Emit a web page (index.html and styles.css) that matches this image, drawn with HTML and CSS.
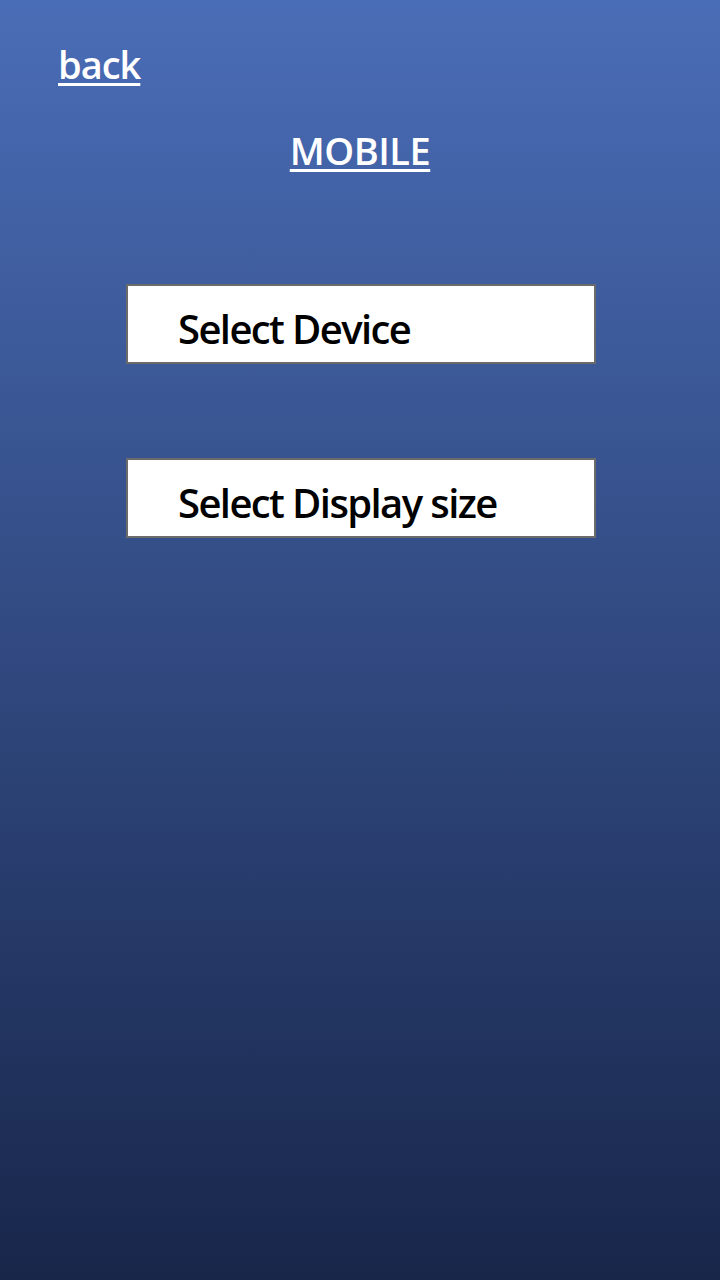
FILE: index.html
```html
<!DOCTYPE html>
<html>
<head>
<meta charset="utf-8">
<link rel="stylesheet" href="styles.css">
</head>
<body>
<div class="screen">
  <a class="back" href="#">back</a>
  <h1 class="title">MOBILE</h1>
  <div class="options">
    <div class="option">Select Device</div>
    <div class="option">Select Display size</div>
  </div>
</div>
</body>
</html>
```
FILE: styles.css
```css
html, body {
  margin: 0;
  padding: 0;
}
body {
  width: 720px;
  height: 1280px;
  background: linear-gradient(to bottom, #4a6db7 0%, #18264a 100%);
  font-family: "Open Sans", "Noto Sans", sans-serif;
  overflow: hidden;
}
.screen {
  display: flex;
  flex-direction: column;
  padding: 38px 0 0 0;
}
.back {
  align-self: flex-start;
  margin-left: 58px;
  color: #fff;
  font-size: 38px;
  font-weight: 600;
  letter-spacing: -1px;
  text-decoration: underline;
  text-decoration-thickness: 3px;
  text-underline-offset: 4px;
  line-height: 52px;
}
.title {
  align-self: center;
  margin: 34px 0 0 0;
  color: #fff;
  font-size: 38px;
  font-weight: 600;
  letter-spacing: -0.5px;
  text-decoration: underline;
  text-decoration-thickness: 3px;
  text-underline-offset: 4px;
  line-height: 52px;
}
.options {
  display: flex;
  flex-direction: column;
  gap: 94px;
  margin: 108px 0 0 126px;
}
.option {
  box-sizing: border-box;
  width: 470px;
  height: 80px;
  background: #fff;
  border: 2px solid #6b6b6b;
  padding-left: 50px;
  display: flex;
  align-items: center;
  padding-top: 8px;
  font-size: 40px;
  font-weight: 600;
  letter-spacing: -1.6px;
  color: #000;
}
```
